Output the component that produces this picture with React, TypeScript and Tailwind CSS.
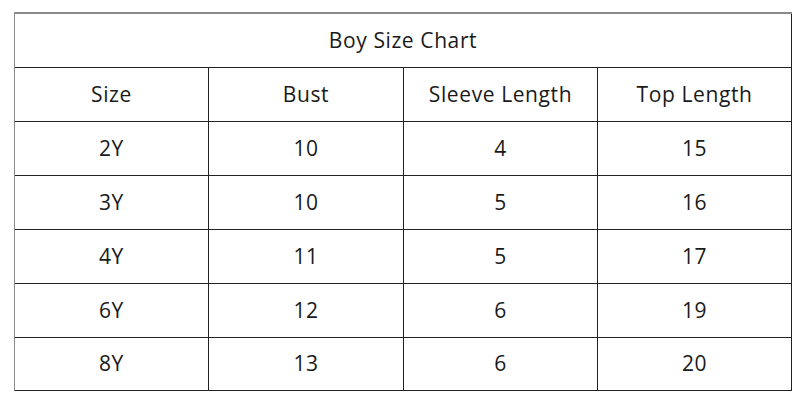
import React from "react";

const headers = ["Size", "Bust", "Sleeve Length", "Top Length"];
const rows = [
  ["2Y", "10", "4", "15"],
  ["3Y", "10", "5", "16"],
  ["4Y", "11", "5", "17"],
  ["6Y", "12", "6", "19"],
  ["8Y", "13", "6", "20"],
];

export default function App() {
  const all = [headers, ...rows];
  return (
    <div className="w-[800px] h-[400px] bg-white pt-[12px] pl-[14px]" style={{ fontFamily: '"Open Sans", "Noto Sans", sans-serif' }}>
      <div className="w-[778px] border-t-2 border-t-[#8a8a8a] border-l border-l-[#8a8a8a] text-[#1a1a1a] text-[21px] tracking-[0.6px]">
        <div className="h-[54px] border-r border-b border-[#222] flex items-center justify-center">
          Boy Size Chart
        </div>
        <div className="grid grid-cols-[194px_195px_194px_194px]">
          {all.map((r, i) =>
            r.map((c, j) => (
              <div
                key={i + "-" + j}
                className={
                  (i === all.length - 1 ? "h-[53px]" : "h-[54px]") +
                  " border-r border-b border-[#222] flex items-center justify-center"
                }
              >
                {c}
              </div>
            ))
          )}
        </div>
      </div>
    </div>
  );
}
